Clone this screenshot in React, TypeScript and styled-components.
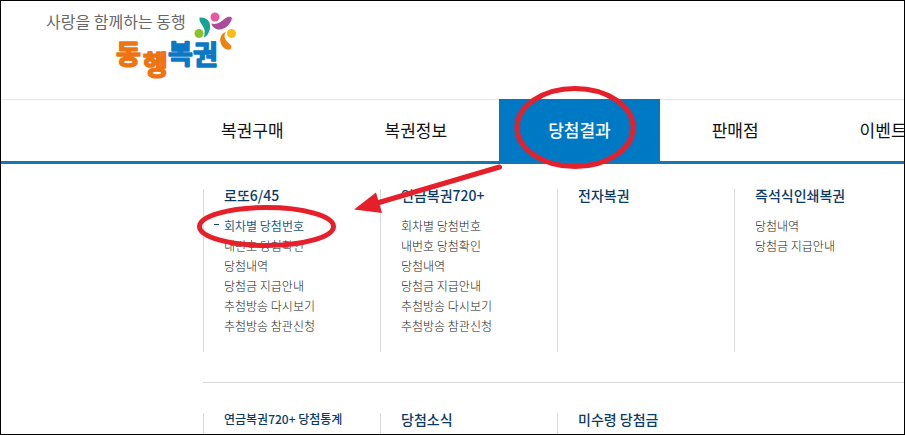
import React from "react";
import styled, { createGlobalStyle } from "styled-components";

const GlobalStyle = createGlobalStyle`
  *, *::before, *::after { box-sizing: border-box; }
  body {
    margin: 0;
    background: #fff;
    font-family: "Noto Sans CJK KR", "Noto Sans", sans-serif;
  }
  ul { list-style: none; margin: 0; padding: 0; }
  a { color: inherit; text-decoration: none; }
`;

const Page = styled.div`
  position: relative;
  height: 100vh;
  overflow: hidden;
  border: 1px solid #000;
  background: #fff;
`;

const Header = styled.header`
  display: flex;
  align-items: flex-start;
  height: 98px;
  padding: 8px 0 0 45px;
`;

const Brand = styled.a`
  display: flex;
  align-items: flex-start;
`;

const Tagline = styled.span`
  font-size: 16px;
  line-height: 24px;
  color: #666;
  white-space: nowrap;
`;

const Logo = styled.svg`
  flex: none;
  margin-left: -72px;
  width: 128px;
  height: 74px;
  overflow: visible;
  font-family: "Noto Sans CJK KR", sans-serif;
  font-weight: 700;
`;

const Nav = styled.nav`
  border-top: 1px solid #e6e6e6;
  border-bottom: 3px solid #1476b4;
`;

const Tabs = styled.ul`
  display: flex;
  gap: 3px;
  padding-left: 171px;
  margin-top: -1px;
`;

const Tab = styled.a<{ $active?: boolean }>`
  display: block;
  padding: 0 49px;
  font-size: 17px;
  line-height: 62px;
  white-space: nowrap;
  font-weight: ${(p) => (p.$active ? 500 : 400)};
  color: ${(p) => (p.$active ? "#fff" : "#111")};
  background: ${(p) => (p.$active ? "#0079c4" : "transparent")};
`;

const Menu = styled.main`
  margin-left: 202px;
`;

const MenuRow = styled.div`
  display: grid;
  grid-template-columns: repeat(4, 177px);
  padding: 25px 0 30px;

  & + & {
    border-top: 1px solid #d9d9d9;
    padding-top: 30px;
  }
`;

const Column = styled.section`
  border-left: 1px solid #d9d9d9;
  padding: 0 0 16px 20px;
`;

const Heading = styled.h2<{ $small?: boolean }>`
  margin: 0 0 15px;
  font-size: ${(p) => (p.$small ? 12 : 14)}px;
  font-weight: 500;
  line-height: 12px;
  color: #0b3a66;
  white-space: nowrap;
`;

const Item = styled.a<{ $active?: boolean }>`
  position: relative;
  display: block;
  font-size: 12px;
  font-weight: ${(p) => (p.$active ? 400 : 300)};
  line-height: 20px;
  white-space: nowrap;
  color: ${(p) => (p.$active ? "#1d5b86" : "#222")};

  &::before {
    content: "";
    display: ${(p) => (p.$active ? "block" : "none")};
    position: absolute;
    left: -10px;
    top: 8px;
    width: 5px;
    height: 1px;
    background: #12406a;
  }
`;

const Marks = styled.svg`
  position: absolute;
  left: -1px;
  top: -1px;
  width: 905px;
  height: 435px;
  pointer-events: none;
`;

const tabs = ["복권구매", "복권정보", "당첨결과", "판매점", "이벤트"];

type Group = { title: string; small?: boolean; items?: string[]; current?: string };

const lottoItems = [
  "회차별 당첨번호",
  "내번호 당첨확인",
  "당첨내역",
  "당첨금 지급안내",
  "추첨방송 다시보기",
  "추첨방송 참관신청",
];

const rows: Group[][] = [
  [
    { title: "로또6/45", items: lottoItems, current: "회차별 당첨번호" },
    { title: "연금복권720+", items: lottoItems },
    { title: "전자복권" },
    { title: "즉석식인쇄복권", items: ["당첨내역", "당첨금 지급안내"] },
  ],
  [
    { title: "연금복권720+ 당첨통계", small: true },
    { title: "당첨소식" },
    { title: "미수령 당첨금" },
  ],
];

function BrandLogo() {
  return (
    <Logo viewBox="114 9 128 74" role="img" aria-label="동행복권">
      <g strokeWidth="1.6" strokeLinejoin="round" strokeLinecap="round" fontSize="27">
        <g fill="#ee7412" stroke="#ee7412">
          <text x="116" y="64">동</text>
          <text x="143" y="75">행</text>
        </g>
        <g fill="#0c78c5" stroke="#0c78c5">
          <text x="168" y="64">복</text>
          <text x="193" y="65">권</text>
        </g>
      </g>
      <circle cx="215" cy="17" r="4.500" fill="#e9589c" />
      <circle cx="199" cy="33.500" r="4.500" fill="#8dc02b" />
      <circle cx="231.500" cy="33.500" r="4.500" fill="#fbbd12" />
      <path d="M199.500 17.500C207 16.500 211 22 210 28C209.500 32 207.500 36 204 37.500C204.500 33 205.500 31 203.500 27.500C202 24 199 22 199.500 17.500Z" fill="#16a396" />
      <path d="M211.500 23.500C217 25 221 22 225 18.500C228 16 231 16.500 232 18C231 24 225 29.500 219.500 29.500C215.500 29.500 212 27 211.500 23.500Z" fill="#ac4b9d" />
      <path d="M226 32C223.500 35 224.500 38.500 227 41.500C229 44 231.500 44.500 231.500 47.500C230 51.500 224 49.500 221.500 45C219 40 220 33.500 226 32Z" fill="#ed8313" />
    </Logo>
  );
}

export default function App() {
  return (
    <>
      <GlobalStyle />
      <Page>
        <Header>
          <Brand href="#">
            <Tagline>사랑을 함께하는 동행</Tagline>
            <BrandLogo />
          </Brand>
        </Header>
        <Nav>
          <Tabs>
            {tabs.map((t) => (
              <li key={t}>
                <Tab href="#" $active={t === "당첨결과"}>{t}</Tab>
              </li>
            ))}
          </Tabs>
        </Nav>
        <Menu>
          {rows.map((row, i) => (
            <MenuRow key={i}>
              {row.map((g) => (
                <Column key={g.title}>
                  <Heading $small={g.small}>{g.title}</Heading>
                  {g.items && (
                    <ul>
                      {g.items.map((item) => (
                        <li key={item}>
                          <Item href="#" $active={item === g.current}>{item}</Item>
                        </li>
                      ))}
                    </ul>
                  )}
                </Column>
              ))}
            </MenuRow>
          ))}
        </Menu>
        <Marks viewBox="0 0 905 435" aria-hidden="true">
          <g fill="none" stroke="#e5202a" strokeWidth="5" strokeLinecap="round">
            <ellipse cx="575" cy="127.500" rx="58" ry="39" />
            <ellipse cx="266.500" cy="226.500" rx="67" ry="19" />
            <path d="M379 202.500L499.500 167" />
          </g>
          <path d="M354 209.500L376 192.500L382 213Z" fill="#e5202a" />
        </Marks>
      </Page>
    </>
  );
}
